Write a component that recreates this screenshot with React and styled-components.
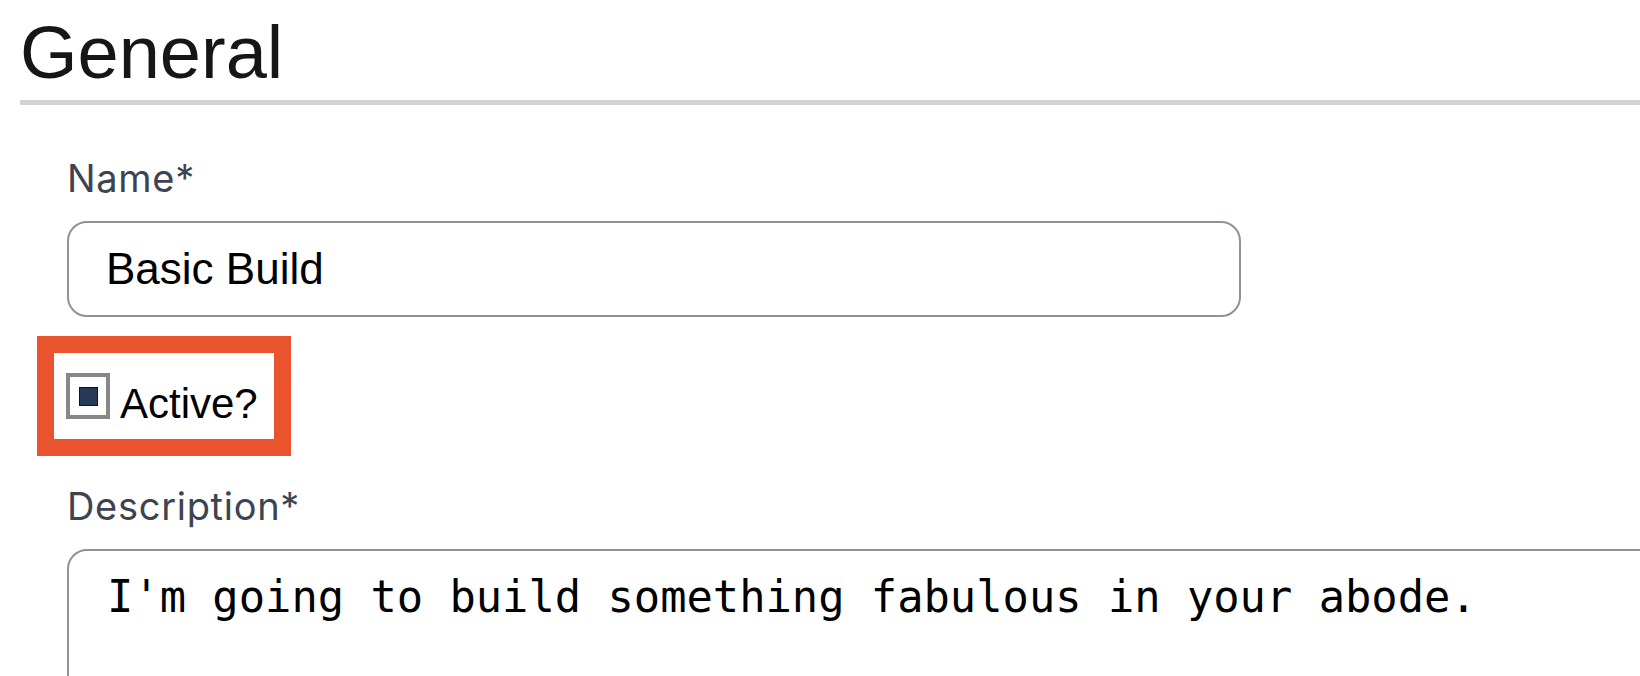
import React from "react";
import styled, { createGlobalStyle } from "styled-components";

const GlobalStyle = createGlobalStyle`
  html, body {
    margin: 0;
    padding: 0;
    background: #ffffff;
  }
`;

const Page = styled.div`
  height: 676px;
  overflow: hidden;
  padding-left: 20px;
  background: #ffffff;
`;

const SectionTitle = styled.h1`
  margin: 0;
  padding: 16px 0 10px 0;
  border-bottom: 5px solid #d2d2d2;
  font-family: "Liberation Sans", Arial, sans-serif;
  font-weight: 400;
  font-size: 74px;
  line-height: 74px;
  color: #161616;
`;

const FormBody = styled.div`
  display: flex;
  flex-direction: column;
  align-items: flex-start;
  padding: 53px 0 0 47px;
`;

const Field = styled.div`
  display: flex;
  flex-direction: column;
  gap: 23px;
`;

const Label = styled.label`
  font-family: Inter, "Noto Sans", sans-serif;
  font-size: 38px;
  line-height: 40px;
  letter-spacing: 0.7px;
  color: #3d4350;
`;

const TextInput = styled.input`
  box-sizing: border-box;
  width: 1174px;
  height: 96px;
  padding: 0 37px;
  border: 2px solid #8f929a;
  border-radius: 20px;
  font-family: "Liberation Sans", Arial, sans-serif;
  font-size: 44px;
  color: #000000;
  background: #ffffff;
  outline: none;
`;

const Highlight = styled.div`
  margin: 19px 0 30px -30px;
  border: 17px solid #e9532e;
  padding: 20px 16px 20px 12px;
  display: flex;
  align-items: flex-end;
  gap: 10px;
`;

const Checkbox = styled.input.attrs({ type: "checkbox" })`
  appearance: none;
  box-sizing: border-box;
  margin: 0;
  width: 44px;
  height: 46px;
  border: 4px solid #888888;
  background: #ffffff;
  display: grid;
  place-items: center;

  &:checked::after {
    content: "";
    display: block;
    width: 19px;
    height: 19px;
    box-sizing: border-box;
    border: 1.5px solid #111418;
    background: #263a58;
  }
`;

const CheckText = styled.label`
  font-family: "Liberation Sans", Arial, sans-serif;
  font-size: 42px;
  line-height: 30px;
  color: #000000;
`;

const TextArea = styled.textarea`
  box-sizing: border-box;
  width: 1700px;
  height: 220px;
  padding: 20px 38px;
  border: 2px solid #8f929a;
  border-radius: 20px;
  font-family: "DejaVu Sans Mono", "Liberation Mono", monospace;
  font-size: 43.75px;
  line-height: 1.2;
  color: #000000;
  background: #ffffff;
  resize: none;
  outline: none;
`;

export default function App() {
  return (
    <Page>
      <GlobalStyle />
      <SectionTitle>General</SectionTitle>
      <FormBody>
        <Field>
          <Label htmlFor="name">Name*</Label>
          <TextInput id="name" defaultValue="Basic Build" />
        </Field>

        <Highlight>
          <Checkbox id="active" defaultChecked />
          <CheckText htmlFor="active">Active?</CheckText>
        </Highlight>

        <Field>
          <Label htmlFor="description">Description*</Label>
          <TextArea
            id="description"
            defaultValue="I'm going to build something fabulous in your abode."
          />
        </Field>
      </FormBody>
    </Page>
  );
}
